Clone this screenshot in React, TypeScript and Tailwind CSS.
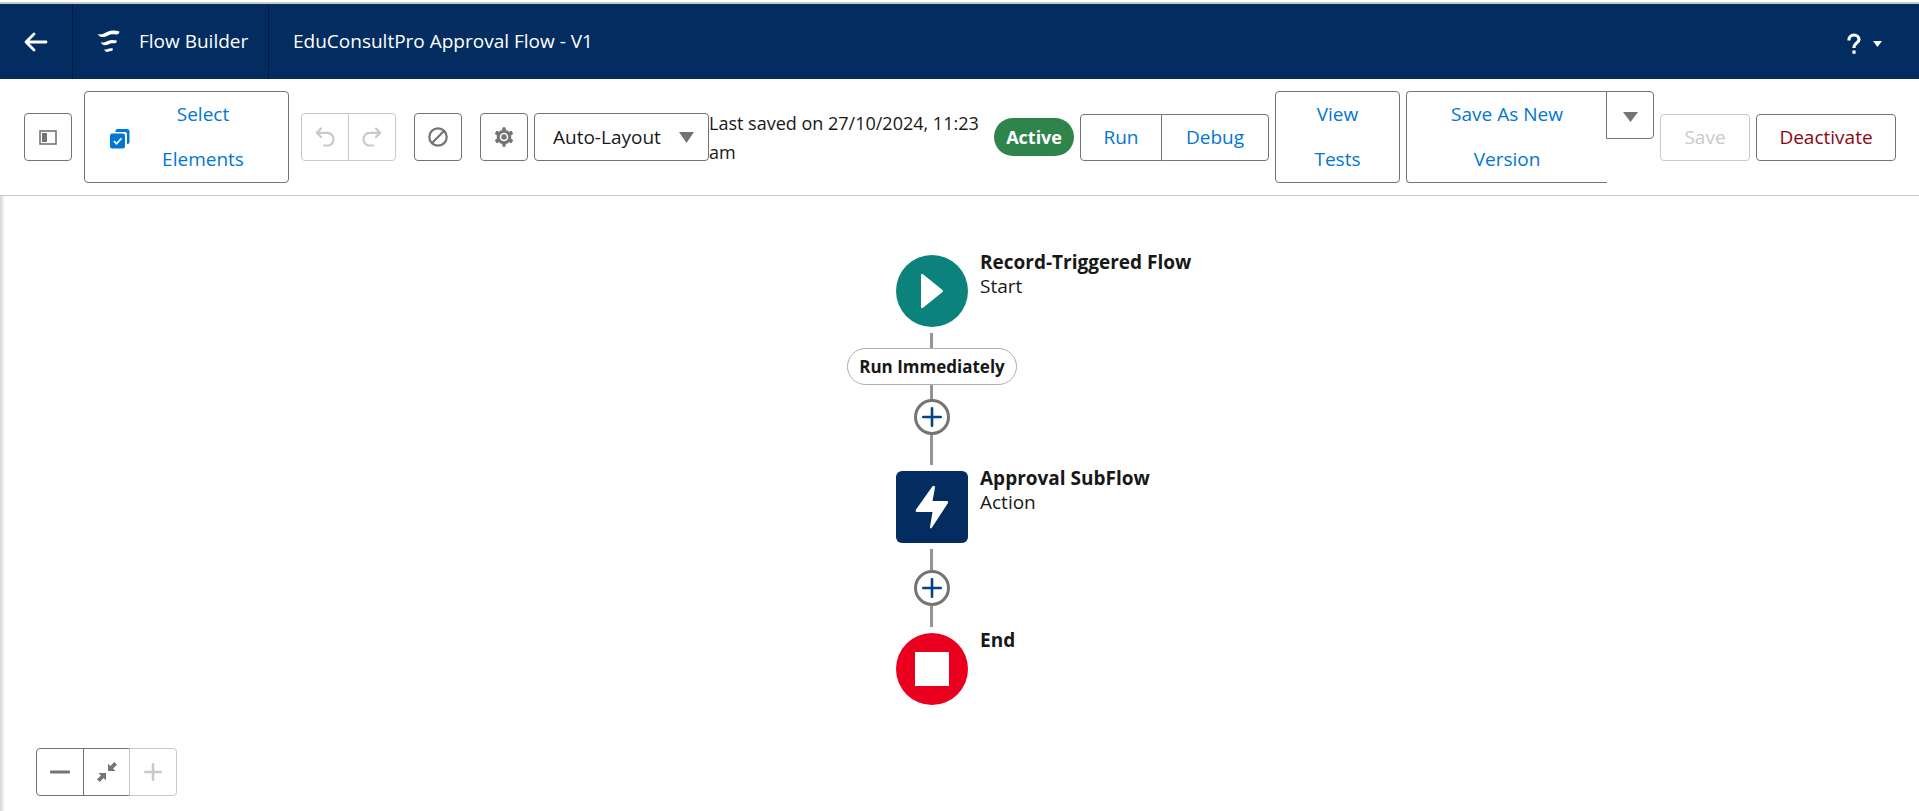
import type { ButtonHTMLAttributes, ReactNode } from "react";

const base = "flex shrink-0 items-center justify-center border bg-white";

function IconButton({ className = "w-12", children, ...rest }: ButtonHTMLAttributes<HTMLButtonElement>) {
  return (
    <button type="button" className={`${base} h-12 ${className}`} {...rest}>
      {children}
    </button>
  );
}

function TextButton({ className = "", children, ...rest }: ButtonHTMLAttributes<HTMLButtonElement>) {
  return (
    <button type="button" className={`${base} text-[19px] leading-[45px] ${className}`} {...rest}>
      {children}
    </button>
  );
}

function Line({ className }: { className: string }) {
  return <div className={`ml-[34px] w-[3px] bg-[#969492] ${className}`} />;
}

function AddElement() {
  return (
    <button
      type="button"
      aria-label="Add element"
      className="ml-[18px] flex size-9 items-center justify-center rounded-full border-3 border-[#747474] bg-white text-[#014486]"
    >
      <svg width="20" height="20" viewBox="0 0 20 20" fill="none" stroke="currentColor" strokeWidth="2.6" strokeLinecap="round">
        <path d="M10 1.3v17.4M1.3 10h17.4" />
      </svg>
    </button>
  );
}

function FlowNode({ title, subtitle, shape, children }: { title: string; subtitle?: string; shape: string; children: ReactNode }) {
  return (
    <div className="flex gap-3">
      <div className={`flex size-[72px] shrink-0 items-center justify-center ${shape}`}>{children}</div>
      <div className="-mt-[5px] w-0 whitespace-nowrap text-[19px] leading-6">
        <h2 className="font-bold">{title}</h2>
        {subtitle && <p>{subtitle}</p>}
      </div>
    </div>
  );
}

export default function App() {
  return (
    <div className="flex min-h-screen flex-col bg-white pt-0.5 font-['Open_Sans','Noto_Sans',sans-serif] text-[#181818]">
      <header className="flex h-[77px] items-stretch border-t-2 border-[#c9c9c9] bg-[#032d60] text-[19px] text-white">
        <a href="#back" aria-label="Back" className="flex w-[73px] items-center justify-center border-r border-[#011a3d]">
          <svg width="24" height="20" viewBox="0 0 24 20" fill="none" stroke="currentColor" strokeWidth="2.8" strokeLinecap="round" strokeLinejoin="round">
            <path d="M10 2L2 10l8 8M2.500 10H22" />
          </svg>
        </a>
        <div className="flex w-[196px] items-center gap-[18px] border-r border-[#011a3d] pl-6">
          <svg width="24" height="24" viewBox="0 0 24 24" fill="currentColor">
            <path d="M.8 4c3 1.200 6-.2 8.700-1.700C13 .4 18 0 22.500 1.600c-.3 2.400-1.700 3.200-3.700 2.900-3.500-.5-5.300-.1-8 1.200C6.500 7.900 2.200 7.600.8 4z" />
            <path d="M3.800 12.300c2.500.8 4.700 0 6.700-1.200 3-1.500 6.200-1.600 9.500-.3-.3 1.900-1.400 2.700-3 2.500-2.500-.4-3.900.1-5.700 1.100-3 1.400-6.300 1-7.500-2.100z" />
            <path d="M7.300 19.300c1.700.6 2.900 0 4-.5 1.600-.7 3.100-.7 4.700-.1-.2 1.600-.9 2.300-2 2.200-1 0-1.600.2-2.400.7-1.700.9-3.800.2-4.300-2.300z" />
          </svg>
          <span>Flow Builder</span>
        </div>
        <h1 className="flex flex-1 items-center pl-6">EduConsultPro Approval Flow - V1</h1>
        <button type="button" aria-label="Help" className="mr-[37px] flex items-center gap-3 pt-1">
          <svg width="14" height="22" viewBox="0 0 14 22" fill="none" stroke="currentColor" strokeWidth="3.200">
            <path d="M2 7.500V6.500a5 4.500 0 0 1 10 0c0 3.500-5 3.500-5 7.500v1M7 17.500v3.200" />
          </svg>
          <svg width="9" height="6" viewBox="0 0 9 6" fill="currentColor">
            <path d="M0 0h9L4.500 6z" />
          </svg>
        </button>
      </header>

      <div className="flex h-[117px] items-center border-b border-[#c9c9c9] pr-[23px] pl-6">
        <IconButton aria-label="Toggle toolbox" className="w-12 rounded border-[#747474] text-[#747474]">
          <svg width="18" height="15" viewBox="0 0 18 15">
            <rect x="1" y="1" width="16" height="13" fill="none" stroke="currentColor" strokeWidth="1.600" />
            <path d="M3 3h5v9H3z" fill="currentColor" />
          </svg>
        </IconButton>
        <TextButton className="ml-3 w-[205px] rounded border-[#747474] pl-[25px] text-[#0176d3]">
          <svg width="20" height="20" viewBox="0 0 20 20" className="mt-1 shrink-0">
            <path d="M5.500 3V2a2 2 0 0 1 2-2H17a2.500 2.500 0 0 1 2.500 2.500V13a2 2 0 0 1-2 2h-.5V5a2 2 0 0 0-2-2z" fill="currentColor" />
            <rect x="0" y="4.500" width="15" height="15" rx="2.200" fill="currentColor" />
            <path d="M3.800 12l2.700 2.700 5-5.400" fill="none" stroke="#fff" strokeWidth="1.700" />
          </svg>
          <span className="flex-1 pr-10 pl-7">Select Elements</span>
        </TextButton>
        <div className="ml-3 flex">
          <IconButton disabled aria-label="Undo" className="w-12 rounded-l border-[#c9c9c9] text-[#c9c9c9]">
            <svg width="20" height="20" viewBox="0 0 20 20" fill="none" stroke="currentColor" strokeWidth="2.200" strokeLinecap="round" strokeLinejoin="round">
              <path d="M6 1.500L1.800 5.800 6 10M2 5.800h10.500a6 6.300 0 0 1 0 12.700H9" />
            </svg>
          </IconButton>
          <IconButton disabled aria-label="Redo" className="-ml-px w-12 rounded-r border-[#c9c9c9] text-[#c9c9c9]">
            <svg width="20" height="20" viewBox="0 0 20 20" fill="none" stroke="currentColor" strokeWidth="2.200" strokeLinecap="round" strokeLinejoin="round">
              <path d="M14 1.500l4.200 4.300L14 10M18 5.800H7.500a6 6.300 0 0 0 0 12.700H11" />
            </svg>
          </IconButton>
        </div>
        <IconButton aria-label="Error list" className="ml-[18px] w-12 rounded border-[#747474] text-[#747474]">
          <svg width="20" height="20" viewBox="0 0 20 20" fill="none" stroke="currentColor" strokeWidth="2.200">
            <circle cx="10" cy="10" r="8.700" />
            <path d="M4 16L16 4" />
          </svg>
        </IconButton>
        <IconButton aria-label="Flow settings" className="ml-[18px] w-12 rounded border-[#747474] text-[#747474]">
          <svg width="20" height="20" viewBox="0 0 20 20" fill="currentColor">
            <circle cx="10" cy="10" r="5.800" fill="none" stroke="currentColor" strokeWidth="3" />
            <circle cx="10" cy="10" r="2.700" />
            <path d="M7.700 4.500L8.700.3h2.600l1 4.200zM7.700 15.500l1 4.200h2.600l1-4.200zM13.900 5.300l3.600-1.500 1.700 2.900-3 2.500zM6.100 5.300L2.500 3.800.8 6.700l3 2.500zM13.900 14.700l3.600 1.500 1.700-2.900-3-2.500zM6.100 14.700l-3.600 1.500-1.700-2.900 3-2.500z" />
          </svg>
        </IconButton>
        <div className="relative ml-1.5 shrink-0">
          <select aria-label="Layout" defaultValue="auto" className="block h-12 w-[175px] appearance-none rounded border border-[#747474] bg-white pl-[18px] text-[19px]">
            <option value="auto">Auto-Layout</option>
            <option value="free">Free-Form</option>
          </select>
          <svg width="15" height="11" viewBox="0 0 15 11" className="pointer-events-none absolute top-[19px] right-[15px] text-[#747474]" fill="currentColor">
            <path d="M0 0h15L7.500 11z" />
          </svg>
        </div>
        <p className="min-w-0 flex-1 pt-0.5 text-[18px] leading-[29px]">Last saved on 27/10/2024, 11:23 am</p>
        <span className="mr-1.5 flex h-[38px] shrink-0 items-center rounded-full bg-[#2e844a] px-3 text-[18px] font-bold text-white">Active</span>
        <div className="flex text-[#0176d3]">
          <TextButton className="w-[82px] rounded-l border-[#747474]">Run</TextButton>
          <TextButton className="-ml-px w-[108px] rounded-r border-[#747474]">Debug</TextButton>
        </div>
        <TextButton className="ml-1.5 w-[125px] rounded border-[#747474] px-8 text-[#0176d3]">View Tests</TextButton>
        <div className="ml-1.5 flex items-start">
          <TextButton className="w-[201px] rounded-l border-r-0 border-[#747474] px-9 text-[#0176d3]">Save As New Version</TextButton>
          <IconButton aria-label="More save options" className="-ml-px w-12 rounded-r border-[#747474] text-[#747474]">
            <svg width="15" height="10" viewBox="0 0 15 10" className="mt-1" fill="currentColor">
              <path d="M0 0h15L7.500 10z" />
            </svg>
          </IconButton>
        </div>
        <TextButton disabled className="ml-1.5 w-[90px] rounded border-[#c9c9c9] text-[#c9c9c9]">Save</TextButton>
        <TextButton className="ml-1.5 w-[140px] rounded border-[#747474] text-[#8e030f]">Deactivate</TextButton>
      </div>

      <main className="flex flex-1 flex-col bg-linear-to-r from-[#d4d4d4] to-white to-[5px] pt-[59px]">
        <div className="mx-auto flex flex-1 flex-col pr-1.5">
          <FlowNode title="Record-Triggered Flow" subtitle="Start" shape="rounded-full bg-[#0b827c]">
            <svg width="24" height="36" viewBox="0 0 24 36" fill="#fff">
              <path d="M1 2.500Q1 0 3 1.200L22.500 17Q23.500 18 22.500 19L3 34.800Q1 36 1 33.500z" />
            </svg>
          </FlowNode>
          <Line className="mt-1.5 h-[15px]" />
          <div className="-ml-[49px] flex h-[37px] w-[170px] items-center justify-center rounded-full border border-[#aeaeae] bg-white text-[17px] font-bold">
            Run Immediately
          </div>
          <Line className="h-[14px]" />
          <AddElement />
          <Line className="mb-1.5 h-[30px]" />
          <FlowNode title="Approval SubFlow" subtitle="Action" shape="rounded-md bg-[#032d60]">
            <svg width="34" height="44" viewBox="0 0 34 44" fill="#fff">
              <path d="M17.500 1.200Q20 0 20 2.500L17.500 16h14Q34 16 32.800 18.300L17 42.500Q15 44.500 15 42L17.500 27H2Q0 27 1 24.500z" />
            </svg>
          </FlowNode>
          <Line className="mt-1.5 h-[21px]" />
          <AddElement />
          <Line className="mb-1.5 h-[21px]" />
          <FlowNode title="End" shape="rounded-full bg-[#ea001e]">
            <span className="size-[34px] bg-white" />
          </FlowNode>
        </div>
        <div className="mb-[15px] ml-9 flex">
          <IconButton aria-label="Zoom out" className="w-12 rounded-l border-[#747474] text-[#747474]">
            <svg width="20" height="4" viewBox="0 0 20 4">
              <rect y=".5" width="20" height="3" rx="1" fill="currentColor" />
            </svg>
          </IconButton>
          <IconButton aria-label="Zoom to fit" className="-ml-px w-[47px] border-r-0 border-[#747474] text-[#747474]">
            <svg width="20" height="20" viewBox="0 0 20 20" fill="currentColor">
              <path d="M11 1.500v7.500h7.500l-2.400-2.400L20 2.700 17.300 0l-3.900 3.900zM9 18.500V11H1.500l2.400 2.400L0 17.300 2.700 20l3.900-3.900z" />
            </svg>
          </IconButton>
          <IconButton disabled aria-label="Zoom in" className="-ml-px w-12 rounded-r border-[#c9c9c9] text-[#c9c9c9]">
            <svg width="18" height="18" viewBox="0 0 18 18" fill="none" stroke="currentColor" strokeWidth="2.600" strokeLinecap="round">
              <path d="M9 1.300v15.400M1.300 9h15.400" />
            </svg>
          </IconButton>
        </div>
      </main>
    </div>
  );
}
